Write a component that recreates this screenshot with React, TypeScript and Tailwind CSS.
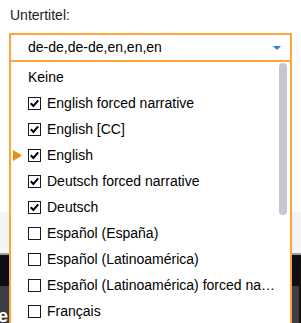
import React from "react";

type Item = { label: string; checked?: boolean; none?: boolean; marker?: boolean };

const items: Item[] = [
  { label: "Keine", none: true },
  { label: "English forced narrative", checked: true },
  { label: "English [CC]", checked: true },
  { label: "English", checked: true, marker: true },
  { label: "Deutsch forced narrative", checked: true },
  { label: "Deutsch", checked: true },
  { label: "Español (España)", checked: false },
  { label: "Español (Latinoamérica)", checked: false },
  { label: "Español (Latinoamérica) forced narrative", checked: false },
  { label: "Français", checked: false },
  { label: "Italiano", checked: false },
];

function Check({ checked }: { checked: boolean }) {
  return (
    <span className="relative w-[13px] h-[13px] shrink-0 border border-[#1a1a1a] bg-white">
      {checked && (
        <svg
          className="absolute left-[-1px] top-[-1px]"
          width="13"
          height="13"
          viewBox="0 0 13 13"
        >
          <path
            d="M2.8 6.2 L5.4 8.9 L10.2 3.4"
            fill="none"
            stroke="#000"
            strokeWidth="2"
          />
        </svg>
      )}
    </span>
  );
}

export default function App() {
  return (
    <div
      className="relative w-[301px] h-[323px] overflow-hidden bg-white flex flex-col"
      style={{ fontFamily: '"Liberation Sans", Arial, sans-serif' }}
    >
      <div className="relative h-[212px] shrink-0 bg-white">
        <div className="pl-[10px] pt-[5px] text-[14px] leading-[20px] text-[#222]">
          Untertitel:
        </div>
        <div className="relative mt-[8px] mx-[9px] z-10">
          <div className="h-[29px] border-2 border-[#ffa53d] bg-white flex items-center pl-[17px] pr-[9px]">
            <span className="flex-1 text-[14px] leading-[25px] text-black">
              de-de,de-de,en,en,en
            </span>
            <svg width="8" height="4" viewBox="0 0 8 4">
              <polygon points="0,0 8,0 4,4" fill="#2a7cf0" />
            </svg>
          </div>
          <div className="absolute top-full left-0 right-0 h-[300px] bg-white border-l-2 border-r-2 border-[#ffa53d] pt-[2px]">
            {items.map((it) => (
              <div
                key={it.label}
                className="relative h-[26px] flex items-center gap-[6px] pl-[17px] pr-[12px] text-[14px] leading-[26px] text-black"
              >
                {it.marker && (
                  <svg
                    className="absolute left-[2px] top-[8px]"
                    width="9"
                    height="11"
                    viewBox="0 0 9 11"
                  >
                    <polygon points="0,0 9,5.5 0,11" fill="#ee8b12" />
                  </svg>
                )}
                {!it.none && <Check checked={!!it.checked} />}
                <span className="flex-1 min-w-0 truncate">{it.label}</span>
              </div>
            ))}
            <div className="absolute right-[3px] top-[1px] w-[8px] h-[152px] rounded-full bg-[#c6c6d2]" />
          </div>
        </div>
      </div>
      <div className="h-[41px] shrink-0 bg-[#f3f4f6]" />
      <div className="h-[2px] shrink-0 bg-[#9c9c9c]" />
      <div className="h-[31px] shrink-0 bg-[#0b0e13]" />
      <div className="flex-1 bg-[#3b3e45] pt-[20px]">
        <span className="block ml-[-2px] text-[18px] leading-[20px] font-bold text-white">e</span>
      </div>
      <div className="absolute right-0 top-[265px] bottom-0 w-[2px] bg-[#111]" />
    </div>
  );
}
